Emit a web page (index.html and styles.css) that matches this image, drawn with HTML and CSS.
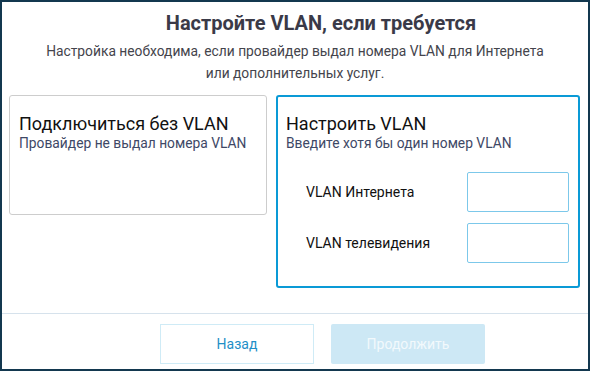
FILE: index.html
```html
<!DOCTYPE html>
<html>
<head>
    <link rel="stylesheet" href="styles.css">
</head>
<body>
    <div class="dialog">
        <div class="dialog-head">
            <div class="dialog-title">Настройте VLAN, если требуется</div>
            <div class="dialog-text">Настройка необходима, если провайдер выдал номера VLAN для Интернета<br>или дополнительных услуг.</div>
        </div>
        <div class="options">
            <div class="option">
                <div class="option-title">Подключиться без VLAN</div>
                <div class="option-text">Провайдер не выдал номера VLAN</div>
            </div>
            <div class="option selected">
                <div class="option-title">Настроить VLAN</div>
                <div class="option-text">Введите хотя бы один номер VLAN</div>
                <div class="fields">
                    <div class="field">
                        <label class="field-label">VLAN Интернета</label>
                        <input class="field-input" type="text">
                    </div>
                    <div class="field">
                        <label class="field-label">VLAN телевидения</label>
                        <input class="field-input" type="text">
                    </div>
                </div>
            </div>
        </div>
        <div class="dialog-foot">
            <button class="btn btn-back">Назад</button>
            <button class="btn btn-next" disabled>Продолжить</button>
        </div>
    </div>
</body>
</html>
```

FILE: styles.css
```css
body {
    font-family: Roboto, "Noto Sans", sans-serif;
    margin: 0;
    background: #13384f;
}
.dialog {
    margin: 2px;
    width: 586px;
    height: 367px;
    background: #ffffff;
    display: flex;
    flex-direction: column;
}
.dialog-head {
    text-align: center;
    padding-top: 8px;
}
.dialog-title {
    font-size: 20px;
    font-weight: bold;
    color: #3a3a48;
    line-height: 27px;
    padding-left: 52px;
}
.dialog-text {
    font-size: 13.8px;
    color: #44444c;
    line-height: 22px;
    margin-top: 3px;
}
.options {
    display: flex;
    align-items: flex-start;
    gap: 9px;
    padding: 11px 0 0 7px;
}
.option {
    width: 258px;
    height: 120px;
    box-sizing: border-box;
    border: 1px solid #cdcdcd;
    border-radius: 3px;
    padding: 17px 9px;
}
.option.selected {
    width: 304px;
    height: 193px;
    border: 2px solid #0a9ad6;
    padding: 16px 8px;
}
.option-title {
    font-size: 18px;
    color: #111111;
    line-height: 22px;
}
.option-text {
    font-size: 13.8px;
    color: #3e4866;
    line-height: 17px;
}
.fields {
    display: flex;
    flex-direction: column;
    gap: 11px;
    margin-top: 20px;
    padding-left: 20px;
    padding-right: 1px;
}
.field {
    display: flex;
    align-items: center;
    justify-content: space-between;
}
.field-label {
    font-size: 14px;
    color: #111111;
}
.field-input {
    width: 102px;
    height: 40px;
    box-sizing: border-box;
    border: 1px solid #7cc8ea;
    border-radius: 2px;
    margin: 0;
}
.dialog-foot {
    margin-top: auto;
    border-top: 1px solid #d6e2ec;
    height: 56px;
    display: flex;
    gap: 17px;
    padding: 10px 0 0 158px;
    box-sizing: border-box;
}
.btn {
    width: 154px;
    height: 40px;
    font-family: Roboto, "Noto Sans", sans-serif;
    font-size: 14px;
    cursor: pointer;
}
.btn-back {
    background: #ffffff;
    border: 1px solid #cfebf6;
    color: #1f8fc7;
}
.btn-next {
    background: #cde8f5;
    border: none;
    border-radius: 2px;
    color: #f2f9fc;
}
```
